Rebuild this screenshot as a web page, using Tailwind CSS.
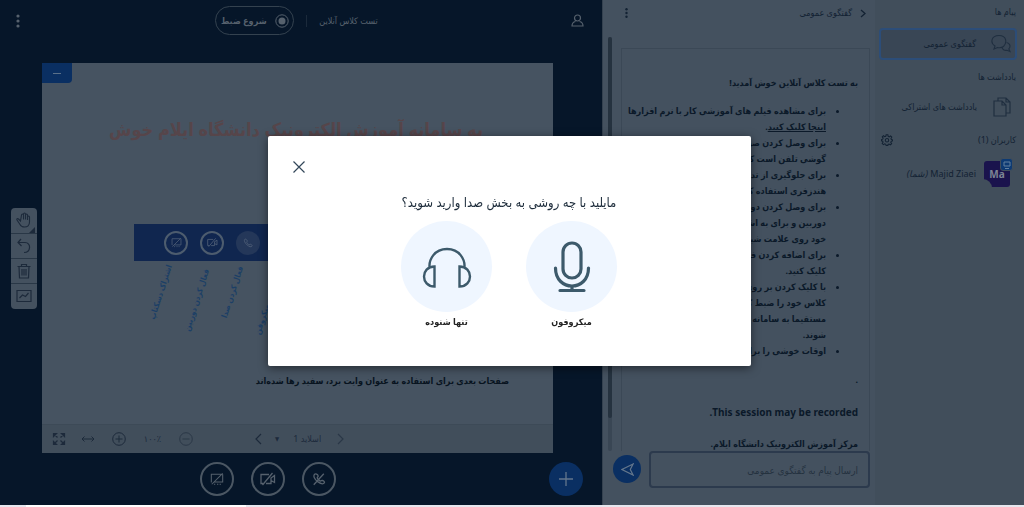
<!DOCTYPE html>
<html lang="fa" dir="rtl">
<head>
<meta charset="utf-8">
<title>تست کلاس آنلاین</title>
<script src="https://cdn.jsdelivr.net/npm/@tailwindcss/browser@4"></script>
</head>
<body class="flex h-screen flex-col overflow-hidden bg-[#061629] font-['Noto_Sans','DejaVu_Sans_Condensed','DejaVu_Sans',sans-serif] text-[10px] leading-4 text-[#132233]">
<svg class="hidden" aria-hidden="true">
  <symbol id="desktop-off" viewBox="0 0 16 16"><path d="M14.500 2.500v9H5M2 11.500h-.5v-9h12M4.500 14h1.500M8 14h1.500M11 14h1.500M2 14 14.500 1.500" fill="none" stroke="currentColor" stroke-width="1.200"/></symbol>
  <symbol id="video-off" viewBox="0 0 16 16"><path d="M9 3.500H1v9h2M6 12.500h5v-6M11 7l3.500-2.500v7L11 9.500M2.500 14 12.500 2" fill="none" stroke="currentColor" stroke-width="1.300"/></symbol>
  <symbol id="phone-off" viewBox="0 0 16 16"><path d="M3 2.500c-2 2 0 6 3.500 8.500s6 3.500 7.500 1.500c.8-1-.8-2.500-2-3-1-.3-1.500 1-2.500.8C8 9.800 6 7.500 6 6.500c0-.8 1.500-1 1-2.300-.5-1.500-3-2.700-4-1.700ZM2 14.500 13.500 2" fill="none" stroke="currentColor" stroke-width="1.500"/></symbol>
  <symbol id="phone" viewBox="0 0 16 16"><path d="M3 2c-2 2 0 6 3.500 9s6.500 4 8 2c.8-1-1-2.500-2.200-3-1-.3-1.500 1-2.500.8C8.500 10.300 6.200 8 6 7c-.2-1 1.300-1.300.8-2.600C6.300 3 4 1 3 2Z" fill="none" stroke="currentColor" stroke-width="1.500"/></symbol>
  <symbol id="dots" viewBox="0 0 4 14"><circle cx="2" cy="2" r="1.600"/><circle cx="2" cy="7" r="1.600"/><circle cx="2" cy="12" r="1.600"/></symbol>
</svg>

<div class="flex min-h-0 flex-1">
  <!-- People and messages -->
  <nav class="w-[149px] shrink-0 bg-[#414e5b] pr-2 pl-1">
    <h2 class="pt-1 text-[9px]">پیام ها</h2>
    <button class="-mr-px mt-2 flex h-8 w-[138px] items-center gap-[15px] rounded-sm border-2 border-[#2c4d78] bg-[#394655] pr-1 text-[9px]">
      <svg class="h-5 w-5 text-[#202f40]" viewBox="0 0 20 20" fill="none" stroke="currentColor" stroke-width="1.100"><path d="M12.500 12.500C16 9 16 1.500 8 1.500S-1 9 4 12L3 15l3.500-1.500c2 .5 4.500 0 6-1Z"/><path d="M15.500 8.500c3.500.5 4.500 4 2.300 6.300l1.200 2.700-3-1.200c-2.500.5-5-.8-5-3.300"/></svg>
      <span>گفتگوی عمومی</span>
    </button>
    <h2 class="mt-[9px] text-[9px]">یادداشت ها</h2>
    <button class="mt-[6px] flex h-8 w-full items-center gap-[15px] pr-1 text-[9px]">
      <svg class="h-5 w-5 text-[#202f40]" viewBox="0 0 20 20" fill="none" stroke="currentColor" stroke-width="1.200"><path d="M6 4V1h8l4 4v11h-4M14 1v4h4M2 4h8l4 4v11H2ZM10 4v4h4"/></svg>
      <span>یادداشت های اشتراکی</span>
    </button>
    <div class="mt-[9px] flex items-center justify-between">
      <h2 class="text-[9px]">کاربران (1)</h2>
      <button aria-label="مدیریت کاربران" class="ml-[2px]">
        <svg class="h-3 w-3" viewBox="0 0 14 14" fill="none" stroke="currentColor" stroke-width="1.200"><path d="M6 1h2l.4 1.800 1.200.5 1.600-1 1.400 1.400-1 1.600.5 1.200L13.500 7v1l-1.600.6-.5 1.200 1 1.500-1.400 1.400-1.600-1-1.200.5L8 13.500H6l-.4-1.500-1.200-.5-1.600 1-1.400-1.400 1-1.600L2 8.400.5 8V6.500L2 6l.5-1.200-1-1.500L2.900 2l1.500 1L5.600 2.600Z"/><circle cx="7" cy="7.300" r="2"/></svg>
      </button>
    </div>
    <div class="mt-[13px] flex items-center gap-2 pr-[6px]">
      <div class="relative h-[26px] w-[26px] shrink-0 rounded-[3px] bg-[#1a134d] text-center text-[10px] leading-[26px] font-bold text-[#7c8494]">Ma
        <span class="absolute -bottom-px -left-px h-[9px] w-[9px] rounded-tr-full bg-[#414e5b]"></span>
        <span class="absolute -top-[3px] -right-[3px] flex h-[13px] w-[13px] items-center justify-center rounded-[3px] border border-[#414e5b] bg-[#0d3a73] text-[#63809f]">
          <svg class="h-2 w-2" viewBox="0 0 8 8" fill="none" stroke="currentColor"><path d="M1 1h6v4H1ZM2 7.500h4"/></svg>
        </span>
      </div>
      <p class="text-[9px] whitespace-nowrap"><bdi>Majid Ziaei</bdi> <i>(شما)</i></p>
    </div>
  </nav>

  <!-- Public chat -->
  <section class="flex w-[273px] shrink-0 flex-col border-l border-[#34414f] bg-[#44515f] pr-[5px] pl-1">
    <header class="flex h-[37px] items-start justify-between pt-[5px] pr-1 pl-[18px]">
      <button class="flex items-center gap-2 text-[9px]">
        <svg class="h-[9px] w-[6px]" viewBox="0 0 6 9" fill="none" stroke="currentColor" stroke-width="1.300"><path d="m1 1 4 3.500L1 8"/></svg>
        <span>گفتگوی عمومی</span>
      </button>
      <button aria-label="گزینه ها" class="pt-[2px]"><svg class="h-3 w-[3px]" fill="currentColor"><use href="#dots"/></svg></button>
    </header>
    <div class="flex min-h-0 flex-1 justify-between">
      <div class="mt-[11px] w-[249px] overflow-hidden border border-b-0 border-[#3b4856] px-[11px] pt-[26px] text-[9px] font-bold whitespace-nowrap text-[#0b1929]">
        <p>به تست کلاس آنلاین خوش آمدید!</p>
        <ul class="mt-[12px] list-disc pr-8">
          <li>برای مشاهده فیلم های آموزشی کار با نرم افزارها<br><a href="#" class="underline">اینجا کلیک کنید</a>.</li>
          <li>برای وصل کردن صوت خود روی علامت<br>گوشی تلفن است کلیک کنید.</li>
          <li>برای جلوگیری از تداخل صدا از هدست یا<br>هندزفری استفاده کنید.</li>
          <li>برای وصل کردن دوربین خود روی علامت<br>دوربین و برای به اشتراک گذاشتن صفحه<br>خود روی علامت شبیه مانیتور کلیک کنید.</li>
          <li>برای اضافه کردن فایل روی علامت +<br>کلیک کنید.</li>
          <li>با کلیک کردن بر روی شروع ضبط<br>کلاس خود را ضبط کنید تا جلسات<br>مستقیما به سامانه ی آموزش اضافه<br>شوند.</li>
          <li>اوقات خوشی را برای شما آرزومندیم</li>
        </ul>
        <p class="mt-[13px]">.</p>
        <p class="mt-4 text-[10px]">This session may be recorded.</p>
        <p class="mt-4">مرکز آموزش الکترونیک دانشگاه ایلام.</p>
      </div>
      <div class="ml-[1px] w-1 rounded-full bg-[#394654]"><div class="h-[92%] rounded-full bg-[#25323f]"></div></div>
    </div>
    <form class="flex h-[54px] items-start gap-2">
      <input aria-label="پیام" class="h-[37px] min-w-0 flex-1 rounded-sm border-2 border-[#2c3a4d] px-2.5 text-[10px] placeholder:text-[#25323f]" placeholder="ارسال پیام به گفتگوی عمومی">
      <button type="button" aria-label="ارسال" class="mt-1 ml-[6px] flex h-7 w-7 items-center justify-center rounded-full bg-[#0a2f62] text-[#63768c]">
        <svg class="h-[13px] w-[13px]" viewBox="0 0 14 14" fill="none" stroke="currentColor" stroke-width="1.300"><path d="M13 1 1 7l12 6-3-6Z"/></svg>
      </button>
    </form>
  </section>

  <!-- Presentation -->
  <main dir="ltr" class="flex min-w-0 flex-1 flex-col bg-[#061629]">
    <header class="flex h-[63px] items-start justify-between pt-[6px] pr-[18px] pl-[14px] text-[#56616d]">
      <button aria-label="گزینه ها" class="mt-2 w-2"><svg class="h-[14px] w-2" fill="currentColor"><use href="#dots"/></svg></button>
      <div class="flex h-[29px] items-center">
        <button dir="rtl" class="flex h-[29px] w-[79px] items-center justify-center gap-2 rounded-full border border-[#34424f] text-[9px] font-bold">
          <svg class="h-[14px] w-[14px]" viewBox="0 0 14 14"><circle cx="7" cy="7" r="6.200" fill="none" stroke="currentColor"/><circle cx="7" cy="7" r="3.500" fill="currentColor"/></svg>
          <span>شروع ضبط</span>
        </button>
        <span class="mr-3 ml-3 h-3 w-px bg-[#1b2a3b]"></span>
        <h1 dir="rtl" class="text-[9px]">تست کلاس آنلاین</h1>
      </div>
      <button aria-label="کاربران" class="mt-2"><svg class="h-[13px] w-[13px]" viewBox="0 0 13 13" fill="none" stroke="currentColor" stroke-width="1.200"><circle cx="6.500" cy="4" r="3"/><path d="M4.500 7.500C2 8 1 9.500 1 12h11c0-2.500-1-4-3.500-4.500"/></svg></button>
    </header>

    <div class="flex min-h-0 flex-1 gap-[5px] pr-[49px] pl-[11px]">
      <div class="w-[26px] shrink-0 self-center overflow-hidden rounded-sm bg-[#44515f] text-[#1d2a3b]">
        <button aria-label="حرکت" class="relative flex h-[25px] w-full items-center justify-center">
          <svg class="h-4 w-4" viewBox="0 0 16 16" fill="none" stroke="currentColor" stroke-width="1.100"><path d="M4.500 9 2.500 7C1.500 6 .5 7 1 8l3 4.500c1 2 2.500 2.500 4.500 2.500 3 0 5-1.500 5-5V5c0-1.300-2-1.300-2 0v3V3c0-1.300-2-1.300-2 0v4.500V2c0-1.300-2-1.300-2 0v5.500V3c0-1.300-2-1.300-2 0Z"/></svg>
          <svg class="absolute right-0.5 bottom-0 h-[6px] w-[6px]" viewBox="0 0 6 6" fill="currentColor"><path d="M6 0v6H0Z"/></svg>
        </button>
        <button aria-label="واگرد" class="flex h-[25px] w-full items-center justify-center border-t border-[#293746]"><svg class="h-4 w-4" viewBox="0 0 16 16" fill="none" stroke="currentColor" stroke-width="1.200"><path d="M5 1 2 4.500 5.500 8M2 4.500h7c6.500 0 6 10-1 10"/></svg></button>
        <button aria-label="پاک کردن" class="flex h-[25px] w-full items-center justify-center border-t border-[#293746]"><svg class="h-4 w-4" viewBox="0 0 16 16" fill="none" stroke="currentColor" stroke-width="1.200"><path d="M1.500 3.500h13M5.500 3V1.500h5V3M3 3.500 3.500 15h9L13 3.500M6 6v6.500M8 6v6.500M10 6v6.500"/></svg></button>
        <button aria-label="چند کاربره" class="flex h-[26px] w-full items-center justify-center border-t border-[#293746]"><svg class="h-4 w-4" viewBox="0 0 16 16" fill="none" stroke="currentColor" stroke-width="1.200"><path d="M1 2.500h14v11H1ZM3.500 10 6.500 7l3 1.500L12.500 5"/></svg></button>
      </div>

      <div class="flex min-w-0 flex-1 flex-col bg-[#465361]">
        <button aria-label="کوچک کردن" class="flex h-5 w-[30px] items-center justify-center rounded-br-sm bg-[#0a2f62]"><span class="h-px w-2 bg-[#5a7089]"></span></button>
        <div class="min-h-0 flex-1 overflow-hidden">
          <p dir="rtl" class="mt-[30px] pr-[70px] text-[18px] leading-8 font-bold whitespace-nowrap text-[#56454a]">به سامانه آموزش الکترونیک دانشگاه ایلام خوش</p>
          <div class="mx-[92px] mt-[79px] flex h-[37px] items-center gap-3 bg-[#10264f] pl-[30px] text-[#4c5c75]">
            <span class="flex h-6 w-6 items-center justify-center rounded-full border-2 border-[#4d5c6e]"><svg class="h-[11px] w-[11px]"><use href="#desktop-off"/></svg></span>
            <span class="flex h-6 w-6 items-center justify-center rounded-full border-2 border-[#4d5c6e]"><svg class="h-[11px] w-[11px]"><use href="#video-off"/></svg></span>
            <span class="flex h-6 w-6 items-center justify-center rounded-full bg-[#243759]"><svg class="h-[10px] w-[10px]"><use href="#phone"/></svg></span>
          </div>
          <div class="mt-[7px] flex h-[68px] items-start pl-[100px] text-[8px] font-bold whitespace-nowrap text-[#1c3f66]">
            <div class="flex h-12 w-9 items-center justify-center"><span dir="rtl" class="-rotate-72">اشتراک دسکتاپ</span></div>
            <div class="flex h-16 w-9 items-center justify-center"><span dir="rtl" class="-rotate-72">فعال کردن دوربین</span></div>
            <div class="flex h-12 w-9 items-center justify-center"><span dir="rtl" class="-rotate-72">فعال کردن صدا</span></div>
            <div class="flex h-16 w-9 items-center justify-center"><span dir="rtl" class="-rotate-72">فعال کردن میکروفن</span></div>
          </div>
          <p dir="rtl" class="mt-[37px] pr-[44px] text-[9px] font-bold whitespace-nowrap text-[#08131f]">صفحات بعدی برای استفاده به عنوان وایت برد، سفید رها شده‌اند</p>
        </div>
        <div class="flex h-[29px] shrink-0 items-center border-t border-[#3d4a57] bg-[#414e5b] pl-[10px] text-[#1d2a3b]">
          <button aria-label="تمام صفحه"><svg class="h-[14px] w-[14px]" viewBox="0 0 14 14" fill="currentColor" stroke="currentColor" stroke-width="1.200"><path d="M1.500 4.500v-3h3ZM1.500 1.500l4 4M9.500 1.500h3v3ZM12.500 1.500l-4 4M1.500 9.500v3h3ZM1.500 12.500l4-4M9.500 12.500h3v-3ZM12.500 12.500l-4-4"/></svg></button>
          <button aria-label="تنظیم عرض" class="ml-[15px]"><svg class="h-[14px] w-[14px]" viewBox="0 0 14 14" fill="none" stroke="currentColor"><path d="M3.500 4.500 1 7l2.500 2.500M10.500 4.500 13 7l-2.500 2.500M1 7h12"/></svg></button>
          <button aria-label="بزرگنمایی" class="ml-[17px]"><svg class="h-[14px] w-[14px]" viewBox="0 0 14 14" fill="none" stroke="currentColor"><circle cx="7" cy="7" r="6.300"/><path d="M3.500 7h7M7 3.500v7"/></svg></button>
          <span class="w-[53px] text-center text-[9px]">۱۰۰٪</span>
          <button aria-label="کوچک نمایی" class="opacity-60"><svg class="h-[14px] w-[14px]" viewBox="0 0 14 14" fill="none" stroke="currentColor"><circle cx="7" cy="7" r="6.300"/><path d="M3.500 7h7"/></svg></button>
          <button aria-label="اسلاید بعدی" class="ml-[61px]"><svg class="h-3 w-2" viewBox="0 0 8 12" fill="none" stroke="currentColor" stroke-width="1.200"><path d="M7 1 2 6l5 5"/></svg></button>
          <span class="ml-[13px] text-[6px] leading-4" aria-hidden="true">▼</span>
          <select aria-label="اسلاید" dir="rtl" class="ml-[2px] w-10 appearance-none text-right text-[9px]"><option>اسلاید 1</option></select>
          <button aria-label="اسلاید قبلی" class="ml-[16px] opacity-60"><svg class="h-3 w-2" viewBox="0 0 8 12" fill="none" stroke="currentColor" stroke-width="1.200"><path d="m1 1 5 5-5 5"/></svg></button>
        </div>
      </div>
    </div>

    <footer class="flex h-[52px] items-center justify-between pr-[19px] pl-[200px] text-[#56616d]">
      <div class="flex gap-[17px]">
        <button aria-label="اشتراک صفحه" class="flex h-[34px] w-[34px] items-center justify-center rounded-full border-2 border-[#4b5763]"><svg class="h-[14px] w-[14px]"><use href="#desktop-off"/></svg></button>
        <button aria-label="دوربین" class="flex h-[34px] w-[34px] items-center justify-center rounded-full border-2 border-[#4b5763]"><svg class="h-4 w-4"><use href="#video-off"/></svg></button>
        <button aria-label="صدا" class="flex h-[34px] w-[34px] items-center justify-center rounded-full border-2 border-[#4b5763]"><svg class="h-[14px] w-[14px]"><use href="#phone-off"/></svg></button>
      </div>
      <button aria-label="افزودن" class="flex h-[34px] w-[34px] items-center justify-center rounded-full bg-[#0a2f62] text-[#63768c]"><svg class="h-4 w-4" viewBox="0 0 16 16" fill="none" stroke="currentColor" stroke-width="1.300"><path d="M8 1v14M1 8h14"/></svg></button>
    </footer>
  </main>
</div>
<div dir="ltr" class="flex h-[2px] shrink-0 bg-[#e6e6ee] pl-[26px]"><span class="w-[220px] bg-white"></span></div>

<!-- Audio choice -->
<div class="fixed inset-0 flex items-center justify-center pr-[6px] pb-[5px]">
  <div role="dialog" aria-labelledby="dialog-title" class="flex min-h-[230px] w-full max-w-[483px] flex-col rounded-xs bg-white px-[24px] pt-[24px] shadow-[0_2px_10px_rgba(0,0,0,0.5)]">
    <button aria-label="بستن" class="self-end text-[#33475a]"><svg class="h-[14px] w-[14px]" viewBox="0 0 14 14" fill="none" stroke="currentColor" stroke-width="1.200"><path d="m1.500 1.500 11 11M12.500 1.500l-11 11"/></svg></button>
    <h2 id="dialog-title" class="mt-[18px] text-center text-[13px] leading-5 text-[#1c2b3a]">مایلید با چه روشی به بخش صدا وارید شوید؟</h2>
    <div class="mt-[9px] flex justify-center gap-[34px] text-[9px] font-bold text-[#222]">
      <button class="flex flex-col items-center gap-[2px]">
        <span class="flex h-[91px] w-[91px] items-center justify-center rounded-full bg-[#eff6ff] text-[#3d5a6b]">
          <svg class="h-[52px] w-[40px]" viewBox="0 0 40 52" fill="none" stroke="currentColor" stroke-width="3.200" stroke-linecap="round"><rect x="11" y="2" width="18" height="35" rx="9"/><path d="M3.500 27c0 24 33 24 33 0M20 45v4M8 49.500h24"/></svg>
        </span>
        <span>میکروفون</span>
      </button>
      <button class="flex flex-col items-center gap-[2px]">
        <span class="flex h-[91px] w-[91px] items-center justify-center rounded-full bg-[#eff6ff] text-[#3d5a6b]">
          <svg class="h-[42px] w-[50px]" viewBox="0 0 50 42" fill="none" stroke="currentColor" stroke-width="2.400"><path d="M7.500 21C7 14 12 3 25 3s18 11 17.500 18M12.500 20.500v20C-1.500 40.500-1.500 20.500 12.500 20.500ZM37.500 20.500v20c14 0 14-20 0-20Z"/></svg>
        </span>
        <span>تنها شنوده</span>
      </button>
    </div>
  </div>
</div>
</body>
</html>
